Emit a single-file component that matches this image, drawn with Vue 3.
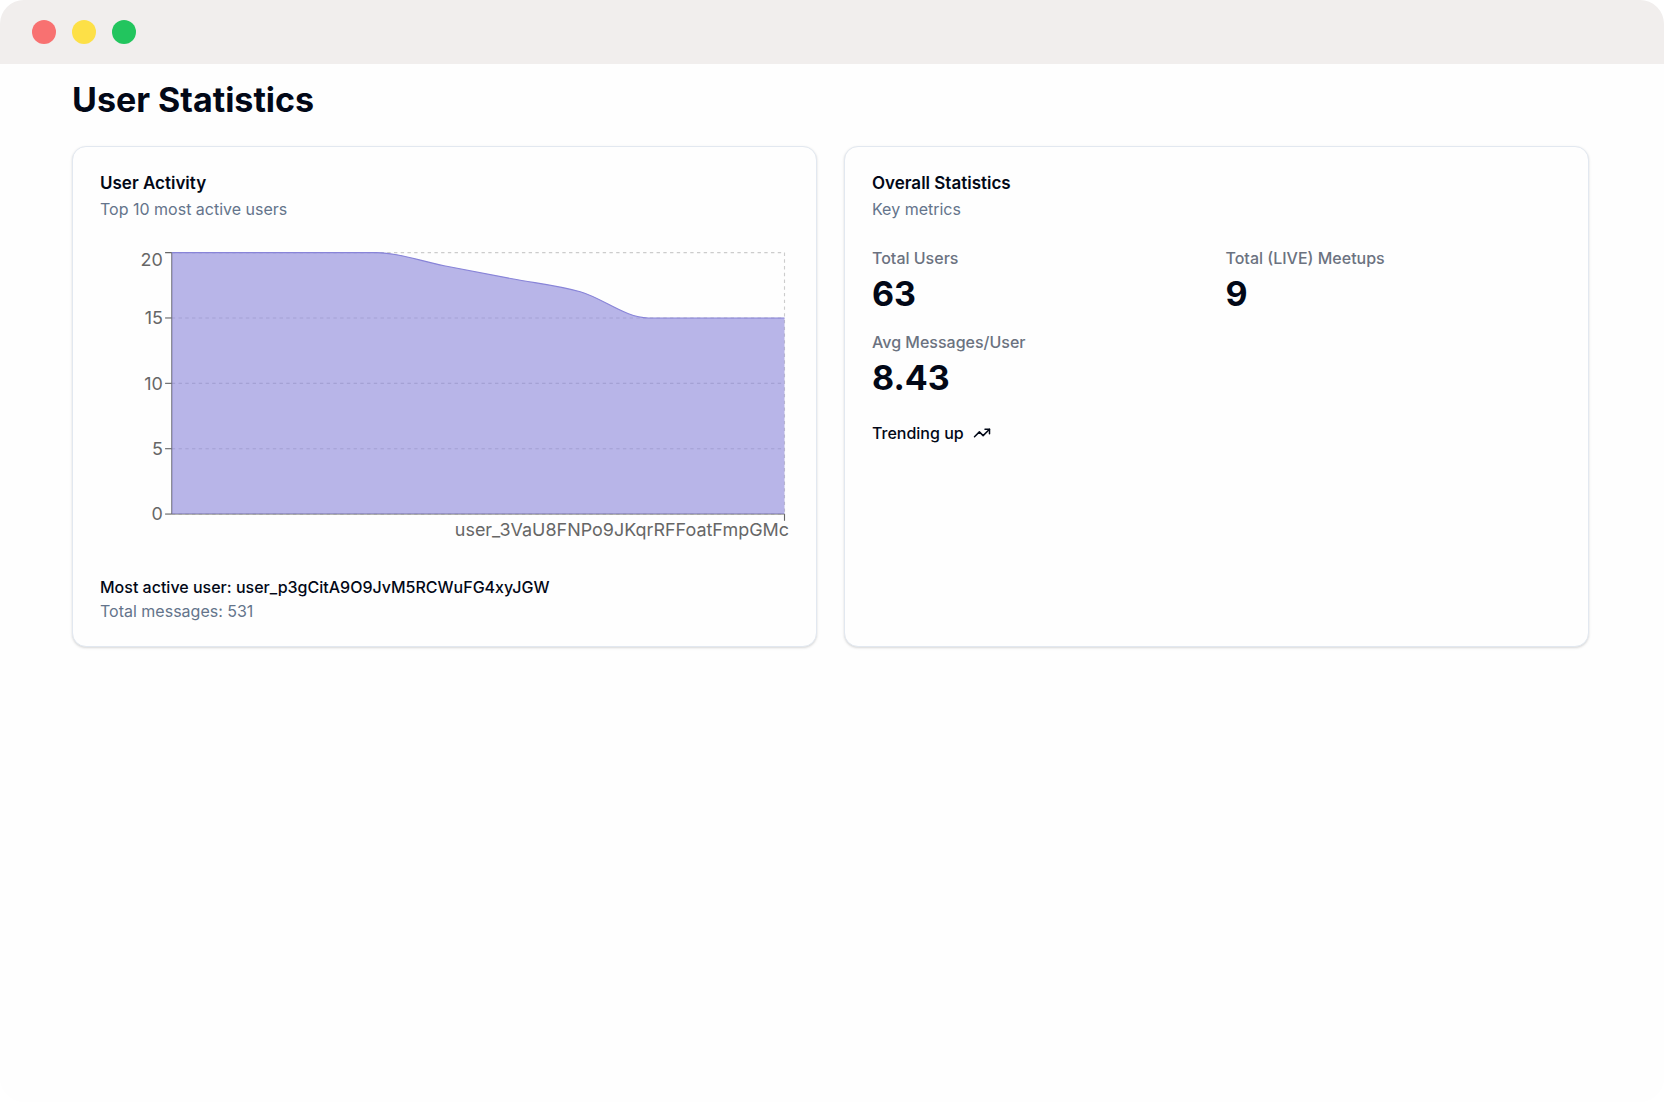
<template>
  <div class="window">
    <header class="window__bar">
      <span class="window__dot window__dot--red"></span>
      <span class="window__dot window__dot--yellow"></span>
      <span class="window__dot window__dot--green"></span>
    </header>

    <main class="page">
      <h1 class="page__title">User Statistics</h1>

      <div class="cards">
        <section class="card">
          <h2 class="card__title">User Activity</h2>
          <p class="card__description">Top 10 most active users</p>

          <svg class="chart" viewBox="0 0 614 271" role="img" aria-label="Messages per user">
            <g class="chart__grid">
              <line
                v-for="tick in ticks"
                :key="`grid-${tick}`"
                :x1="plot.left"
                :y1="scaleY(tick)"
                :x2="plot.right"
                :y2="scaleY(tick)"
              />
              <line :x1="plot.right" :y1="plot.top" :x2="plot.right" :y2="plot.bottom" />
            </g>

            <g class="chart__axis">
              <line :x1="plot.left" :y1="plot.top" :x2="plot.left" :y2="plot.bottom" />
              <line :x1="plot.left" :y1="plot.bottom" :x2="plot.right" :y2="plot.bottom" />
              <line :x1="plot.right" :y1="plot.bottom" :x2="plot.right" :y2="plot.bottom + 6" />
              <line
                v-for="tick in ticks"
                :key="`tick-${tick}`"
                :x1="plot.left - 6"
                :y1="scaleY(tick)"
                :x2="plot.left"
                :y2="scaleY(tick)"
              />
            </g>

            <path class="chart__area" :d="areaPath" />
            <path class="chart__line" :d="linePath" />

            <g class="chart__labels">
              <text
                v-for="tick in ticks"
                :key="`label-${tick}`"
                :x="plot.left - 8"
                :y="labelY(tick)"
                dy="0.355em"
              >
                {{ tick }}
              </text>
              <text x="614" :y="plot.bottom + 8" dy="0.71em">{{ lastUser }}</text>
            </g>
          </svg>

          <div class="card__footer">
            <p class="card__strong">Most active user: user_p3gCitA9O9JvM5RCWuFG4xyJGW</p>
            <p class="card__muted">Total messages: 531</p>
          </div>
        </section>

        <section class="card">
          <h2 class="card__title">Overall Statistics</h2>
          <p class="card__description">Key metrics</p>

          <dl class="metrics">
            <div v-for="metric in metrics" :key="metric.label" class="metric">
              <dt class="metric__label">{{ metric.label }}</dt>
              <dd class="metric__value">{{ metric.value }}</dd>
            </div>
          </dl>

          <p class="trend">
            Trending up
            <svg class="trend__icon" viewBox="0 0 24 24" aria-hidden="true">
              <polyline points="22 7 13.5 15.5 8.5 10.5 2 17" />
              <polyline points="16 7 22 7 22 13" />
            </svg>
          </p>
        </section>
      </div>
    </main>
  </div>
</template>

<script setup>
import { computed } from 'vue'

const messages = [20, 20, 20, 20, 19, 18, 17, 15, 15, 15]
const ticks = [0, 5, 10, 15, 20]
const lastUser = 'user_3VaU8FNPo9JKqrRFFoatFmpGMc'

const metrics = [
  { label: 'Total Users', value: '63' },
  { label: 'Total (LIVE) Meetups', value: '9' },
  { label: 'Avg Messages/User', value: '8.43' },
]

const plot = { left: 64, right: 610, top: 5, bottom: 238 }

const scaleY = (value) => plot.bottom - (value / 20) * (plot.bottom - plot.top)

// keep the top label inside the chart
const labelY = (value) => Math.max(scaleY(value), 11)

const points = messages.map((value, i) => ({
  x: plot.left + (i * (plot.right - plot.left)) / (messages.length - 1),
  y: scaleY(value),
}))

// monotone cubic interpolation, all steps are equally wide
const linePath = computed(() => {
  const step = points[1].x - points[0].x
  const slopes = points.slice(1).map((p, i) => (p.y - points[i].y) / step)
  const tangents = points.map((_, i) => {
    const before = slopes[i - 1] ?? slopes[0]
    const after = slopes[i] ?? slopes[slopes.length - 1]
    if (before * after <= 0) return 0
    const size = Math.min(Math.abs(before), Math.abs(after), Math.abs(before + after) / 4)
    return Math.sign(before) * size * 2
  })

  return points.reduce((path, p, i) => {
    if (i === 0) return `M${p.x},${p.y}`
    const prev = points[i - 1]
    const dx = step / 3
    return `${path}C${prev.x + dx},${prev.y + dx * tangents[i - 1]},${p.x - dx},${p.y - dx * tangents[i]},${p.x},${p.y}`
  }, '')
})

const areaPath = computed(
  () => `${linePath.value}L${plot.right},${plot.bottom}L${plot.left},${plot.bottom}Z`,
)
</script>

<style>
body {
  margin: 0;
  background: #fff;
}
</style>

<style scoped>
.window {
  min-height: 100vh;
  overflow: hidden;
  border-radius: 24px;
  background: #fefefe;
  color: #020817;
  font-family: Inter, "Liberation Sans", sans-serif;
}

.window__bar {
  display: flex;
  align-items: center;
  gap: 16px;
  height: 64px;
  padding: 0 32px;
  background: #f1eeed;
}

.window__dot {
  width: 24px;
  height: 24px;
  border-radius: 50%;
}
.window__dot--red { background: #f87171; }
.window__dot--yellow { background: #fde047; }
.window__dot--green { background: #22c55e; }

.page {
  padding: 16px 75px 16px 72px;
}

.page__title {
  margin: 0 0 26px;
  font-size: 34px;
  line-height: 40px;
  font-weight: 700;
}

/* cards */
.cards {
  display: grid;
  grid-template-columns: repeat(2, minmax(0, 1fr));
  gap: 27px;
}

.card {
  padding: 27px;
  border: 1px solid #e2e8f0;
  border-radius: 14px;
  background: #fefefe;
  box-shadow: 0 1px 3px rgba(0, 0, 0, 0.1), 0 1px 2px rgba(0, 0, 0, 0.06);
}

.card__title {
  margin: 0;
  font-size: 17px;
  line-height: 18px;
  font-weight: 600;
}

.card__description {
  margin: 6px 0 27px;
  color: #64748b;
  font-size: 16px;
  line-height: 22px;
}

.card__footer {
  display: grid;
  gap: 8px;
  margin-top: 28px;
  font-size: 16px;
  line-height: 16px;
}

.card__strong {
  margin: 0;
  font-weight: 500;
}

.card__muted {
  margin: 0;
  color: #64748b;
}

/* chart */
.chart {
  display: block;
  width: 100%;
  overflow: visible;
}

.chart__grid {
  stroke: #ccc;
  stroke-dasharray: 3 3;
}

.chart__axis { stroke: #666; }

.chart__area {
  fill: #8884d8;
  fill-opacity: 0.6;
}

.chart__line {
  fill: none;
  stroke: #8884d8;
}

.chart__labels {
  fill: #666;
  font-size: 16px;
  text-anchor: end;
}

/* metrics */
.metrics {
  display: grid;
  grid-template-columns: repeat(2, minmax(0, 1fr));
  gap: 16px 18px;
  margin: 0;
}

.metric {
  display: grid;
  gap: 4px;
}

.metric__label {
  color: #6b7280;
  font-size: 16px;
  line-height: 22px;
  font-weight: 500;
}

.metric__value {
  margin: 0;
  font-size: 34px;
  line-height: 42px;
  font-weight: 700;
}

.trend {
  display: flex;
  align-items: center;
  gap: 9px;
  margin: 25px 0 0;
  font-size: 16px;
  line-height: 18px;
  font-weight: 500;
}

.trend__icon {
  width: 18px;
  height: 18px;
  fill: none;
  stroke: currentColor;
  stroke-width: 2;
  stroke-linecap: round;
  stroke-linejoin: round;
}
</style>
